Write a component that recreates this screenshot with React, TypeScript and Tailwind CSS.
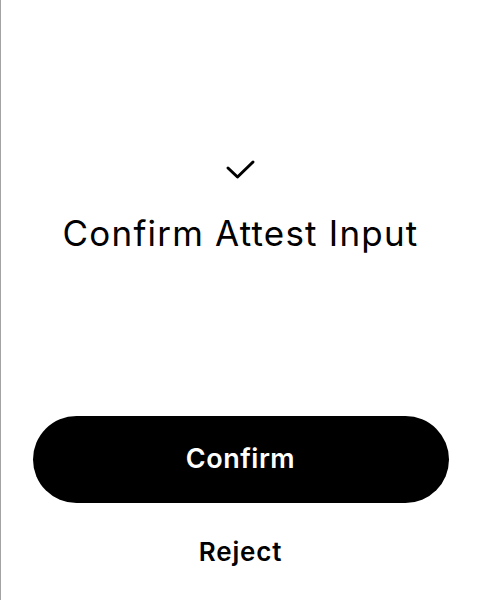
import React from "react";

export default function App() {
  return (
    <div className="w-[480px] h-[600px] bg-white border-l border-[#a3a3a3] flex flex-col items-center" style={{ fontFamily: "Inter, 'Noto Sans', sans-serif" }}>
      <div className="mt-[158px] h-[24px] flex items-center justify-center">
        <svg width="32" height="24" viewBox="0 0 32 24" fill="none">
          <path d="M3 10 L12.5 19 L28 4" stroke="#000" strokeWidth="3" strokeLinecap="round" strokeLinejoin="round" />
        </svg>
      </div>
      <h1 className="mt-[31px] text-[35px] leading-[40px] text-black font-normal tracking-[1.2px]">Confirm Attest Input</h1>
      <div className="flex-1" />
      <button className="w-[416px] h-[87px] rounded-full bg-black text-white text-[27px] font-semibold tracking-[0.5px]">Confirm</button>
      <button className="mt-[34px] mb-[33px] text-[26px] font-semibold text-black leading-[30px] tracking-[0.8px]">Reject</button>
    </div>
  );
}
